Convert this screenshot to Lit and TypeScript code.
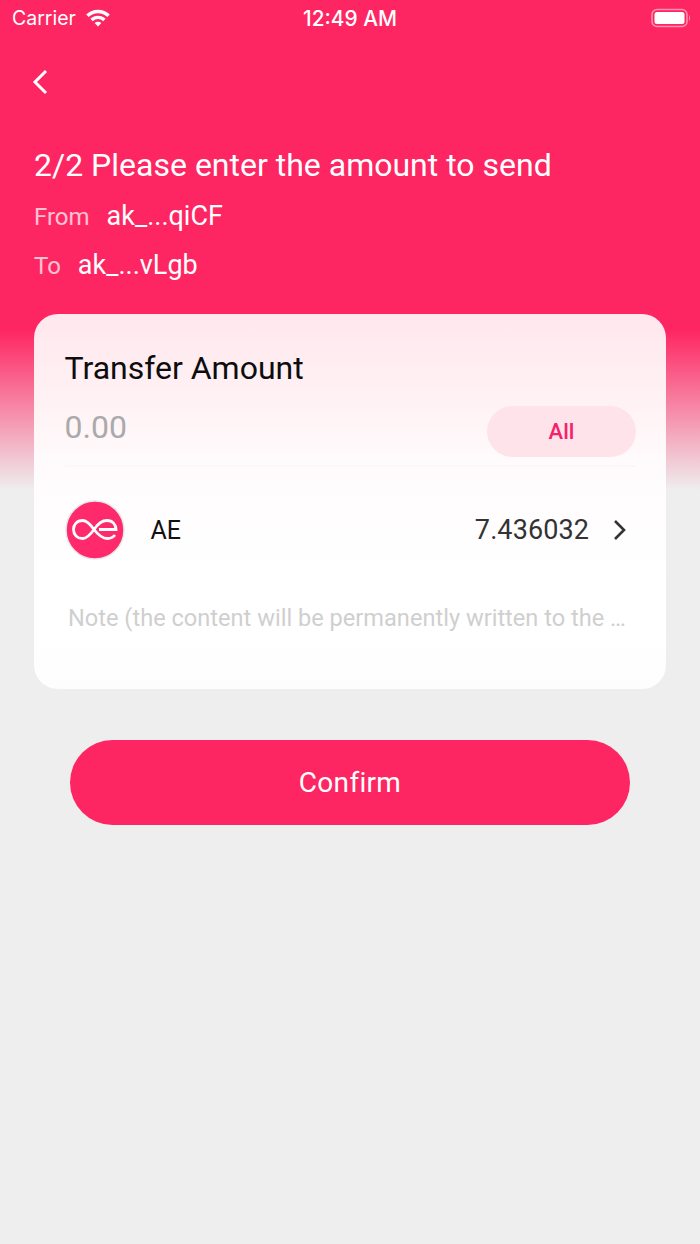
import { LitElement, html, css } from "lit";
import { customElement } from "lit/decorators.js";

@customElement("app-root")
export class AppRoot extends LitElement {
  static styles = css`
    :host {
      display: block;
      width: 700px;
      height: 1244px;
      overflow: hidden;
      font-family: Roboto, "Liberation Sans", sans-serif;
      background: linear-gradient(180deg, #fe2662 0, #fe2662 330px, #eeeeee 490px, #eeeeee 100%);
      color: #fff;
    }
    .status {
      height: 36px;
      display: grid;
      grid-template-columns: 1fr auto 1fr;
      align-items: center;
      padding: 0 9px;
      font-family: Inter, "Liberation Sans", sans-serif;
      font-size: 19.5px;
    }
    .carrier { display: flex; align-items: center; gap: 9px; font-weight: 400; padding-left: 3px; }
    .time { font-weight: 500; font-size: 20.8px; }
    .battery { justify-self: end; display: block; }
    .nav { height: 56px; padding: 0 0 0 32px; display: flex; align-items: center; margin-top: 18px; }
    .head { padding: 0 34px; margin-top: 35px; }
    .title { font-size: 32px; line-height: 40px; }
    .addr { display: flex; align-items: baseline; margin-top: 11px; height: 40px; line-height: 40px; font-size: 27px; }
    .addr + .addr { margin-top: 9px; }
    .addr span { font-size: 24px; opacity: 0.72; margin-right: 17px; }
    .card {
      margin: 29px 34px 0;
      height: 375px;
      box-sizing: border-box;
      border-radius: 24px;
      background: linear-gradient(180deg, #ffe7ed 0, #fff2f5 90px, #fffbfc 150px, #ffffff 260px, #ffffff 320px, #fdfdfd 100%);
      padding: 0 30px 0 30.5px;
      display: flex;
      flex-direction: column;
      color: #111;
    }
    .label { font-size: 32px; line-height: 40px; margin-top: 34px; color: #0d0d0d; }
    .amount-row {
      display: flex;
      justify-content: space-between;
      align-items: center;
      height: 72px;
      margin-top: 4px;
      padding-bottom: 1px;
      border-bottom: 2px solid #fbf7f8;
    }
    .amount { font-size: 32px; color: #aaaaaa; position: relative; top: -1px; }
    .all {
      width: 149px;
      height: 51px;
      border-radius: 26px;
      background: #ffe3ea;
      color: #f5216a;
      font-size: 22px;
      font-weight: 500;
      display: flex;
      align-items: center;
      justify-content: center;
      position: relative;
      top: 3px;
    }
    .token { display: flex; align-items: center; height: 126px; }
    .token svg.logo { width: 60px; height: 60px; flex: none; }
    .name { margin-left: 26px; font-size: 25px; color: #111; }
    .bal { margin-left: auto; font-size: 27px; color: #333; letter-spacing: 0.1px; }
    .chev { margin-left: 24px; margin-right: 9px; }
    .note {
      font-size: 23.6px;
      color: #cfcfcf;
      margin: 9px 0 0 3.5px;
      white-space: nowrap;
      line-height: 32px;
    }
    .confirm {
      margin: 51px 70px 0;
      height: 85px;
      border-radius: 43px;
      background: #fe2662;
      color: #fff;
      font-size: 28px;
      letter-spacing: 0.3px;
      display: flex;
      align-items: center;
      justify-content: center;
    }
  `;

  render() {
    return html`
      <div class="status">
        <div class="carrier">
          <span>Carrier</span>
          <svg width="26" height="20" viewBox="0 0 26 20">
            <path d="M1.2 6.6 A16.8 16.8 0 0 1 24.8 6.6 L22.4 9 A13.4 13.4 0 0 0 3.6 9 Z" fill="#fff"/>
            <path d="M5.4 10.8 A10.8 10.8 0 0 1 20.6 10.8 L18.2 13.2 A7.4 7.4 0 0 0 7.8 13.2 Z" fill="#fff"/>
            <path d="M9.6 15 A4.9 4.9 0 0 1 16.4 15 L13 18.5 Z" fill="#fff"/>
          </svg>
        </div>
        <div class="time">12:49 AM</div>
        <svg class="battery" width="40" height="20" viewBox="0 0 40 20">
          <rect x="1" y="1.5" width="35" height="17" rx="5" fill="none" stroke="#fff" stroke-opacity="0.5" stroke-width="1.5"/>
          <rect x="3.5" y="4" width="30" height="12" rx="2.5" fill="#fff"/>
          <path d="M38 7 C39.3 7.5 39.3 12.5 38 13 Z" fill="#fff" fill-opacity="0.5"/>
        </svg>
      </div>
      <div class="nav">
        <svg width="18" height="26" viewBox="0 0 18 26">
          <path d="M14 2 L3 13 L14 24" fill="none" stroke="#fff" stroke-width="3"/>
        </svg>
      </div>
      <div class="head">
        <div class="title">2/2 Please enter the amount to send</div>
        <div class="addr"><span>From</span>ak_...qiCF</div>
        <div class="addr"><span>To</span>ak_...vLgb</div>
      </div>
      <div class="card">
        <div class="label">Transfer Amount</div>
        <div class="amount-row">
          <div class="amount">0.00</div>
          <div class="all">All</div>
        </div>
        <div class="token">
          <svg class="logo" viewBox="0 0 60 60">
            <circle cx="30" cy="30" r="29" fill="#fe2a6c" stroke="#e8e8e8" stroke-width="1.5"/>
            <path d="M50 35 C48 37.5 45.5 38.5 42.5 38.5 C36 38.5 32 33.5 29 29.5 C25.5 24.5 22 20.5 17.5 20.5 C12 20.5 8.5 24.5 8.5 29.5 C8.5 34.5 12 38.5 17.5 38.5 C22 38.5 25.5 34.5 29 29.5 C32 25 36 20.5 42 20.5 C47.5 20.5 51 24.5 51 29.5 L34 29.5" fill="none" stroke="#fff" stroke-width="2.8"/>
          </svg>
          <div class="name">AE</div>
          <div class="bal">7.436032</div>
          <svg class="chev" width="14" height="22" viewBox="0 0 14 22">
            <path d="M2 2 L11 11 L2 20" fill="none" stroke="#333" stroke-width="2.6"/>
          </svg>
        </div>
        <div class="note">Note (the content will be permanently written to the …</div>
      </div>
      <div class="confirm">Confirm</div>
    `;
  }
}
